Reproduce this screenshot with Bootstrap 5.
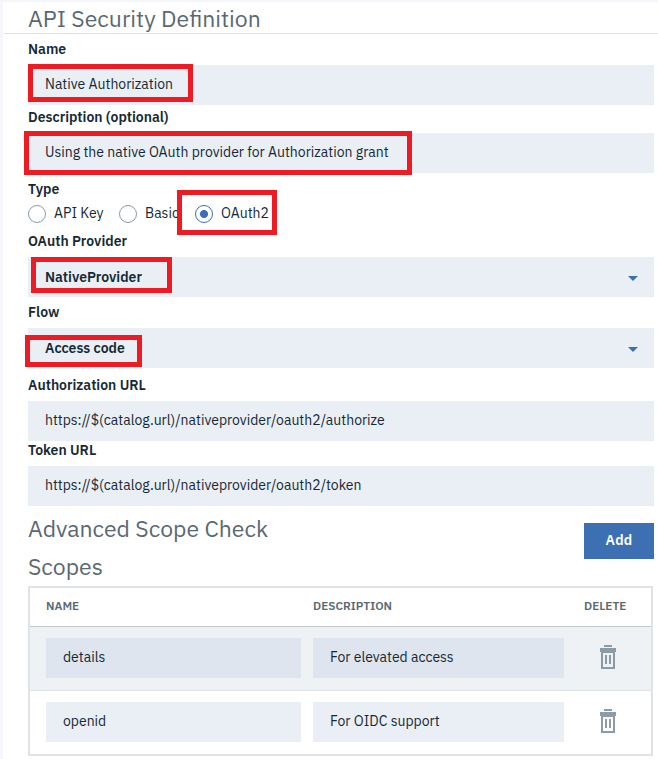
<!DOCTYPE html>
<html lang="en">
<head>
<meta charset="utf-8">
<meta name="viewport" content="width=device-width, initial-scale=1">
<title>API Security Definition</title>
<link rel="stylesheet" href="https://cdn.jsdelivr.net/npm/bootstrap@5.3.0/dist/css/bootstrap.min.css">
<style>
  body { font-family: "IBM Plex Sans", Roboto, "Liberation Sans", sans-serif; font-size: 14px; line-height: 20px; color: #152935; background: #fff; overflow: hidden; }
  .panel { height: 759px; border-top: 2px solid #f5f6fb; border-left: 3px solid #f5f7fb; }
  .panel-head { height: 32px; border-bottom: 1px solid #dfe0e1; padding-left: 24px; margin-left: 1px; }
  .title { font-size: 23px; line-height: 34px; font-weight: 400; color: #5a6872; margin: 0; white-space: nowrap; }
  .panel-head .title { line-height: 32px; }
  .panel-body { padding: 0 4px 0 25px; }
  .flabel { display: block; font-weight: 600; padding-top: 5px; height: 31px; }
  .flabel.h28 { height: 28px; padding-top: 2px; }
  .flabel.type { padding-top: 6px; }
  .flabel.h33 { height: 33px; padding-top: 7px; }
  .flabel.h25 { height: 25px; padding-top: 0; line-height: 18px; }
  .field { height: 40px; background: #eaeff6; padding: 0 17px 2px; white-space: nowrap; }
  .field.pick { padding: 0 16px 0 17px; }
  .caret { width: 10px; height: 5px; margin-top: 2px; }
  .radios { height: 20px; }
  .dot { width: 18px; height: 18px; flex: none; border: 1px solid #8c9ba5; border-radius: 50%; background: #fff; }
  .dot.on { border-color: #3d70b2; background: radial-gradient(circle, #3d70b2 3.6px, #fff 4.4px); }
  .hl { position: absolute; border: 5px solid #ed1c24; pointer-events: none; }
  .hl-name { left: 0; top: -1px; width: 165px; height: 38px; }
  .hl-desc { left: -4px; top: -2px; width: 388px; height: 44px; }
  .hl-type { left: 149px; top: -14px; width: 100px; height: 45px; }
  .hl-prov { left: 3px; top: 0; width: 141px; height: 36px; }
  .hl-flow { left: -3px; top: 7px; width: 117px; height: 32px; }
  .opt { white-space: nowrap; padding-bottom: 2px; }
  .o-key { width: 49px; }
  .o-basic { width: 34px; }
  .add { width: 70px; height: 36px; background: #3d70b2; color: #fff; font-weight: 600; border: 0; border-radius: 0; padding: 0 0 2px; font-size: 14px; line-height: 34px; margin-top: 17px; letter-spacing: .2px; }
  .adv { height: 80px; padding: 0; }
  .adv1 { padding-top: 5px; }
  .adv2 { padding-top: 4px; }
  .scopes { border: 2px solid #dfe3e6; margin-right: 1px; height: 170px; }
  .srow { display: grid; grid-template-columns: 255px 251px 1fr; column-gap: 12px; padding: 0 0 2px 16px; align-items: center; }
  .shead { height: 39px; border-bottom: 1px solid #c5c9cb; font-size: 11.8px; font-weight: 600; color: #5a6872; padding-bottom: 3px; }
  .shot { height: 64px; background: #eef2f5; border-bottom: 1px solid #dfe3e6; }
  .shot .field { background: #dfe5ee; }
  .splain { height: 63px; }
  .del { padding-left: 8px; }
  .bin { margin: 0 0 2px 24px; display: block; }
</style>
</head>
<body>
<main class="panel">
  <header class="panel-head"><h1 class="title">API Security Definition</h1></header>
  <div class="panel-body">
    <label class="flabel">Name</label>
    <div class="field d-flex align-items-center position-relative"><span>Native Authorization</span><i class="hl hl-name"></i></div>
    <label class="flabel h28">Description (optional)</label>
    <div class="field d-flex align-items-center position-relative"><span>Using the native OAuth provider for Authorization grant</span><i class="hl hl-desc"></i></div>
    <label class="flabel type">Type</label>
    <div class="radios d-flex align-items-center position-relative">
      <span class="dot me-2"></span><span class="opt o-key">API Key</span>
      <span class="dot me-2 ms-3"></span><span class="opt o-basic">Basic</span>
      <span class="dot on ms-3 me-2"></span><span class="opt">OAuth2</span>
      <i class="hl hl-type"></i>
    </div>
    <label class="flabel h33">OAuth Provider</label>
    <div class="field pick d-flex align-items-center justify-content-between position-relative"><span class="fw-semibold">NativeProvider</span><svg class="caret" viewBox="0 0 10 5"><path d="M0 0h10L5 5z" fill="#3d70b2"/></svg><i class="hl hl-prov"></i></div>
    <label class="flabel">Flow</label>
    <div class="field pick d-flex align-items-center justify-content-between position-relative"><span class="fw-semibold">Access code</span><svg class="caret" viewBox="0 0 10 5"><path d="M0 0h10L5 5z" fill="#3d70b2"/></svg><i class="hl hl-flow"></i></div>
    <label class="flabel h33">Authorization URL</label>
    <div class="field d-flex align-items-center"><span>https://$(catalog.url)/nativeprovider/oauth2/authorize</span></div>
    <label class="flabel h25">Token URL</label>
    <div class="field d-flex align-items-center"><span>https://$(catalog.url)/nativeprovider/oauth2/token</span></div>
    <div class="d-flex justify-content-between align-items-start adv">
      <div><h2 class="title adv1">Advanced Scope Check</h2><h2 class="title adv2">Scopes</h2></div>
      <button class="btn add">Add</button>
    </div>
    <section class="scopes">
      <div class="srow shead"><span>NAME</span><span>DESCRIPTION</span><span class="del">DELETE</span></div>
      <div class="srow shot">
        <div class="field d-flex align-items-center">details</div>
        <div class="field d-flex align-items-center">For elevated access</div>
        <svg class="bin" width="16" height="24" viewBox="0 0 16 24" fill="#8c9ba5" shape-rendering="crispEdges"><path d="M4 0h8v2H4zM0 3h16v4h-1v17H1V7H0zM3 8v14h10V8zM5 10h2v9H5zM9 10h2v9H9z" fill-rule="evenodd"/></svg>
      </div>
      <div class="srow splain">
        <div class="field d-flex align-items-center">openid</div>
        <div class="field d-flex align-items-center">For OIDC support</div>
        <svg class="bin" width="16" height="24" viewBox="0 0 16 24" fill="#8c9ba5" shape-rendering="crispEdges"><path d="M4 0h8v2H4zM0 3h16v4h-1v17H1V7H0zM3 8v14h10V8zM5 10h2v9H5zM9 10h2v9H9z" fill-rule="evenodd"/></svg>
      </div>
    </section>
  </div>
</main>
<script src="https://cdn.jsdelivr.net/npm/bootstrap@5.3.0/dist/js/bootstrap.bundle.min.js"></script>
</body>
</html>
